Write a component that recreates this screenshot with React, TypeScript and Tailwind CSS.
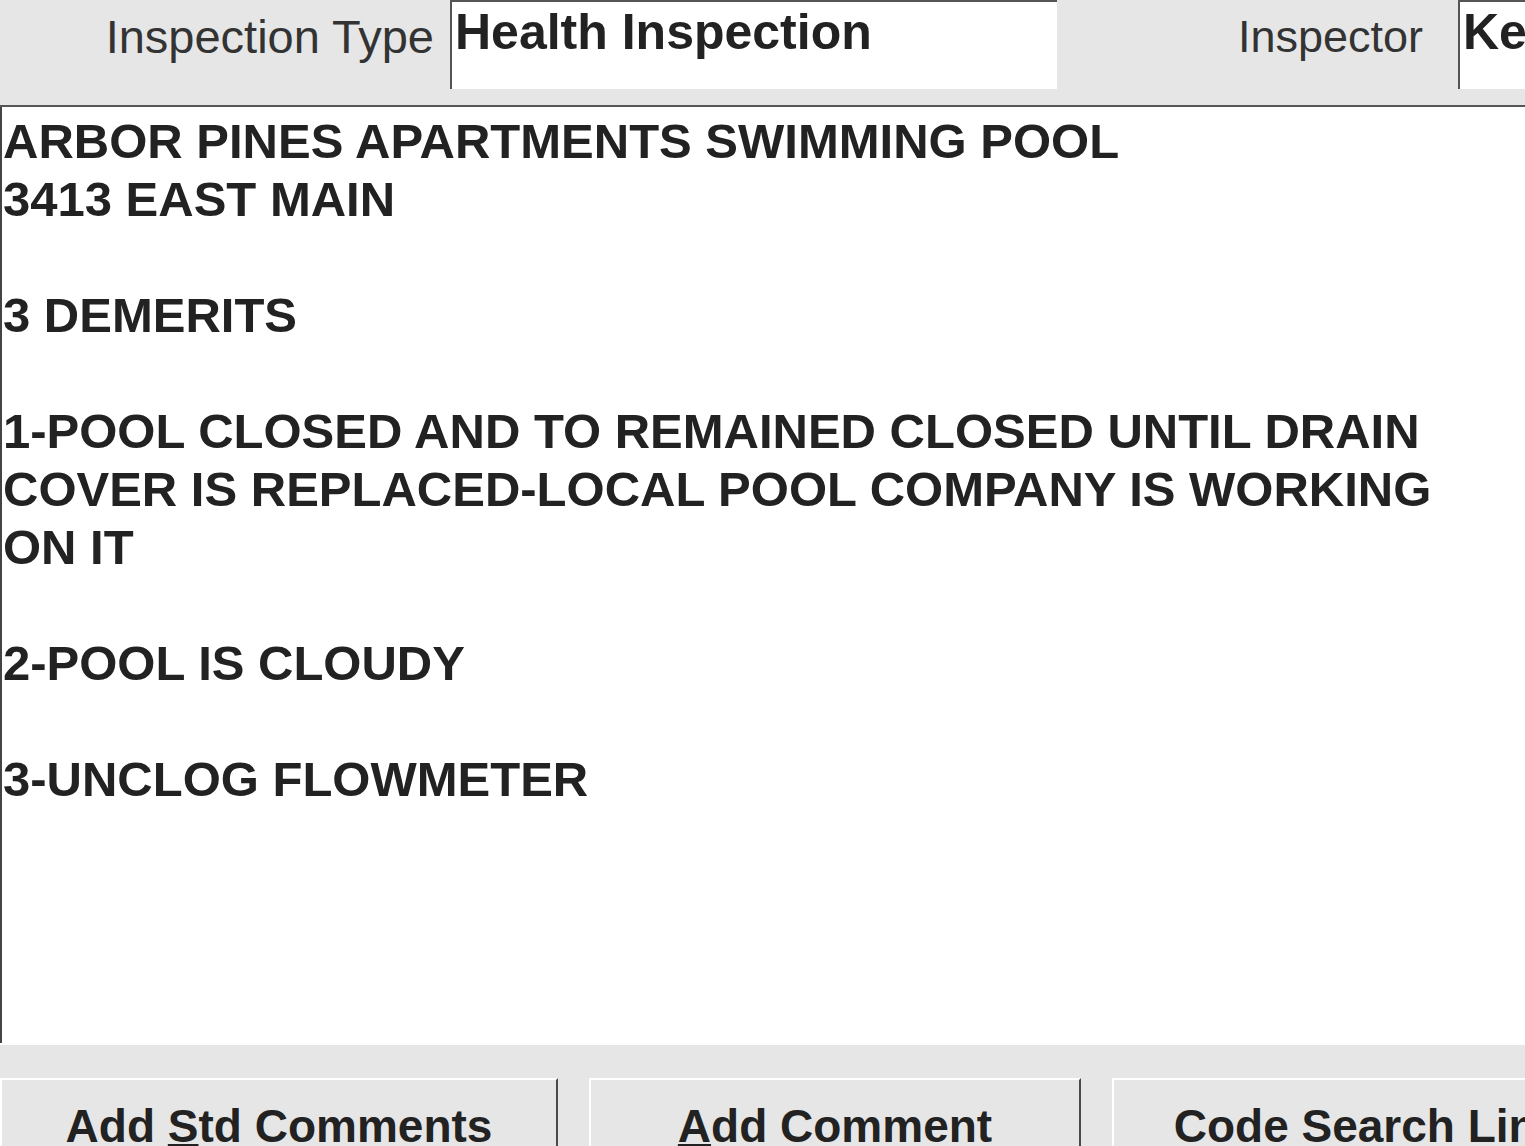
import React from "react";

const lines = [
  "ARBOR PINES APARTMENTS SWIMMING POOL",
  "3413 EAST MAIN",
  "",
  "3 DEMERITS",
  "",
  "1-POOL CLOSED AND TO REMAINED CLOSED UNTIL DRAIN",
  "COVER IS REPLACED-LOCAL POOL COMPANY IS WORKING",
  "ON IT",
  "",
  "2-POOL IS CLOUDY",
  "",
  "3-UNCLOG FLOWMETER",
];

function Btn({ pre, key1, post, w }: { pre: string; key1: string; post: string; w: string }) {
  return (
    <div className={`${w} shrink-0 h-[80px] border-t-2 border-l-2 border-r-2 border-t-white border-l-white border-r-[#4a4a4a] bg-[#e6e6e6] pt-[23px] text-center`}>
      <span className="text-[46px] font-bold leading-none text-[#222] whitespace-nowrap">
        {pre}
        <span className="underline decoration-2 underline-offset-2">{key1}</span>
        {post}
      </span>
    </div>
  );
}

export default function App() {
  return (
    <div className="w-[1525px] h-[1146px] overflow-hidden bg-[#e6e6e6] flex flex-col font-['Liberation_Sans',Arial,sans-serif]">
      {/* header fields */}
      <div className="h-[107px] shrink-0 flex items-start border-b-2 border-[#555]">
        <div className="w-[450px] shrink-0 pr-[16px] pt-[8px] text-right text-[47px] leading-[58px] text-[#333]">
          Inspection Type
        </div>
        <div className="w-[607px] h-[89px] shrink-0 bg-white border-l-2 border-t-2 border-[#555] pl-[3px] pt-[1px] text-[50px] font-bold leading-[58px] text-[#222]">
          Health Inspection
        </div>
        <div className="w-[401px] shrink-0 pr-[35px] pt-[8px] text-right text-[45px] leading-[58px] text-[#333]">
          Inspector
        </div>
        <div className="flex-1 h-[89px] bg-white border-l-2 border-t-2 border-[#555] pl-[3px] pt-[1px] text-[50px] font-bold leading-[58px] text-[#222] whitespace-nowrap overflow-hidden">
          Ke
        </div>
      </div>

      {/* comments text */}
      <div className="h-[936px] shrink-0 bg-white border-l-2 border-[#444] pl-[1px] pt-[5px] text-[49px] font-bold leading-[58px] text-[#222]">
        {lines.map((l, i) => (
          <div key={i} className="whitespace-pre h-[58px]">
            {l || " "}
          </div>
        ))}
      </div>

      {/* buttons */}
      <div className="flex-1 border-t-2 border-white pt-[33px] flex gap-[31px]">
        <Btn pre="Add " key1="S" post="td Comments" w="w-[558px]" />
        <Btn pre="" key1="A" post="dd Comment" w="w-[492px]" />
        <Btn pre="Code Search Link" key1="" post="" w="w-[512px]" />
      </div>
    </div>
  );
}
